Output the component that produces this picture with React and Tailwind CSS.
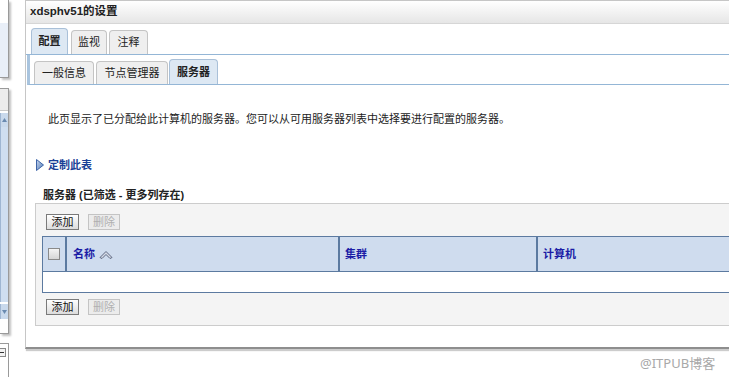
import React from 'react';

const cjk = { fontFamily: '"Liberation Sans", "Noto Sans CJK SC", sans-serif' };

function Tab({ label, active, sub }) {
  const base = 'flex items-center justify-center rounded-t-[4px] border border-b-0 text-[11px] text-[#222]';
  if (active) {
    return (
      <div className={`${base} ${sub ? 'h-[25px]' : 'h-[26px]'} border-[#a9c0d8] bg-[#dde8f3] font-bold`}>
        {label}
      </div>
    );
  }
  return (
    <div className={`${base} ${sub ? 'h-[23px]' : 'h-[24px]'} border-[#c4c4c4] bg-[#efefef]`}>{label}</div>
  );
}

function Btn({ label, disabled }) {
  return disabled ? (
    <div className="flex h-[16px] w-[32px] items-center justify-center border border-[#c4c4c4] bg-[#ececec] text-[11px] text-[#b0b0b0]">{label}</div>
  ) : (
    <div className="flex h-[16px] w-[33px] items-center justify-center border border-[#7a7a7a] bg-gradient-to-b from-white to-[#dcdcdc] text-[11px] text-[#111]">{label}</div>
  );
}

function SortIcon() {
  return (
    <svg width="14" height="9" viewBox="0 0 14 9" className="ml-[4px]">
      <polygon points="1,7.5 7,1.5 13,7.5 11,8.5 7,4.5 3,8.5" fill="#d6dbe6" stroke="#5d6780" strokeWidth="1" strokeLinejoin="round" />
    </svg>
  );
}

function LeftStrip() {
  return (
    <div className="flex w-[9px] shrink-0 flex-col">
      <div className="flex h-[78px] flex-col border-r border-b border-[#9a9a9a] shadow-[2px_2px_2px_rgba(0,0,0,0.25)]">
        <div className="h-[23px] bg-white" />
        <div className="flex-1 bg-[#e9eff8]" />
      </div>
      <div className="mt-[10px] flex h-[246px] flex-col border-t border-r border-b border-[#9a9a9a] shadow-[2px_2px_2px_rgba(0,0,0,0.25)]">
        <div className="h-[22px] border-b border-[#c8c8c8] bg-[#ececec]" />
        <div className="mt-[2px] flex h-[14px] items-center justify-end border-l border-[#9fb6d2] bg-[#c9d9ec] pr-[1px]">
          <svg width="5" height="4" viewBox="0 0 5 4"><polygon points="0,4 2.5,0 5,4" fill="#6a8ab0" /></svg>
        </div>
        <div className="flex-1 border-l border-[#9fb6d2] bg-[#cfdef0]" />
        <div className="mt-[2px] flex h-[15px] items-center justify-end border-l border-[#9fb6d2] bg-[#c9d9ec] pr-[1px]">
          <svg width="5" height="4" viewBox="0 0 5 4"><polygon points="0,0 2.5,4 5,0" fill="#6a8ab0" /></svg>
        </div>
        <div className="h-[14px] bg-white" />
      </div>
      <div className="mt-[9px] flex-1 border-t border-r border-[#9a9a9a] bg-white pt-[4px]">
        <div className="flex h-[9px] w-[6px] items-center border border-l-0 border-[#888] bg-[#f2f2f2]">
          <div className="h-px w-[4px] bg-[#333]" />
        </div>
      </div>
    </div>
  );
}

export default function App() {
  return (
    <div className="relative flex h-[377px] w-[729px] overflow-hidden bg-white" style={cjk}>
      <LeftStrip />
      <div className="ml-[16px] h-[349px] w-[800px] min-w-[800px] shrink-0 border-t border-l border-b-2 border-[#c6c6c6] border-b-[#8e8e8e] shadow-[0_3px_1px_-1px_rgba(0,0,0,0.2)]">
        <div className="flex h-[23px] items-center border-b border-[#d6d6d6] bg-gradient-to-b from-white to-[#e6e6e6] pl-[4px] text-[11.5px] font-bold text-[#222]">
          xdsphv51的设置
        </div>
        <div className="flex h-[31px] items-end border-b border-[#94b6d6] pl-[5px]">
          <div className="w-[37px]"><Tab label="配置" active /></div>
          <div className="ml-[3px] w-[36px]"><Tab label="监视" /></div>
          <div className="ml-[2px] w-[39px]"><Tab label="注释" /></div>
        </div>
        <div className="ml-px flex h-[30px] items-end border-b border-l-[3px] border-[#94b6d6] border-l-[#a9c4de] pl-[4px]">
          <div className="w-[60px]"><Tab label="一般信息" sub /></div>
          <div className="ml-[2px] w-[72px]"><Tab label="节点管理器" sub /></div>
          <div className="ml-px w-[49px]"><Tab label="服务器" active sub /></div>
        </div>

        <div className="mt-[26px] pl-[22px] text-[11px] leading-[16px] text-[#222]">
          此页显示了已分配给此计算机的服务器。您可以从可用服务器列表中选择要进行配置的服务器。
        </div>

        <div className="mt-[30px] flex items-center pl-[10px]">
          <svg width="8" height="12" viewBox="0 0 8 12">
            <defs>
              <linearGradient id="tri" x1="0" y1="0" x2="1" y2="1">
                <stop offset="0" stopColor="#c9d8ee" />
                <stop offset="1" stopColor="#4f77b5" />
              </linearGradient>
            </defs>
            <polygon points="0.5,0.5 7.5,6 0.5,11.5" fill="url(#tri)" stroke="#3d64a8" strokeWidth="1" />
          </svg>
          <span className="ml-[4px] text-[11px] font-bold leading-[16px] text-[#1a3f96]">定制此表</span>
        </div>

        <div className="mt-[14px] pl-[17px] text-[11px] font-bold leading-[16px] text-[#222]">
          服务器 (已筛选 - 更多列存在)
        </div>

        <div className="ml-[9px] border border-r-0 border-[#cccccc] bg-[#f4f4f4] pt-[10px] pb-[10px]">
          <div className="flex gap-[9px] pl-[10px]">
            <Btn label="添加" />
            <Btn label="删除" disabled />
          </div>
          <div className="mt-[6px] ml-[6px] border-y border-l border-[#5c7aa0]">
            <div className="grid h-[34px] grid-cols-[24px_273px_198px_1fr] bg-[#cfdcee] text-[11px] font-bold text-[#1c1ca6]">
              <div className="flex items-center justify-center border-r-2 border-[#5c7aa0]">
                <div className="h-[12px] w-[12px] border border-[#8a8a8a] bg-gradient-to-b from-[#f4f4f4] to-[#d6d6d6]" />
              </div>
              <div className="flex items-center border-r-2 border-[#5c7aa0] pl-[6px]">
                名称<SortIcon />
              </div>
              <div className="flex items-center border-r-2 border-[#5c7aa0] pl-[5px]">集群</div>
              <div className="flex items-center pl-[5px]">计算机</div>
            </div>
            <div className="h-[21px] border-t border-[#5c7aa0] bg-white" />
          </div>
          <div className="mt-[6px] flex gap-[9px] pl-[10px]">
            <Btn label="添加" />
            <Btn label="删除" disabled />
          </div>
        </div>
      </div>
      <div className="absolute top-[354px] left-[640px] text-[13px] text-[#a8a8a8]" style={{ fontFamily: '"Noto Sans", "Noto Sans CJK SC", sans-serif' }}>
        @ITPUB博客
      </div>
    </div>
  );
}
